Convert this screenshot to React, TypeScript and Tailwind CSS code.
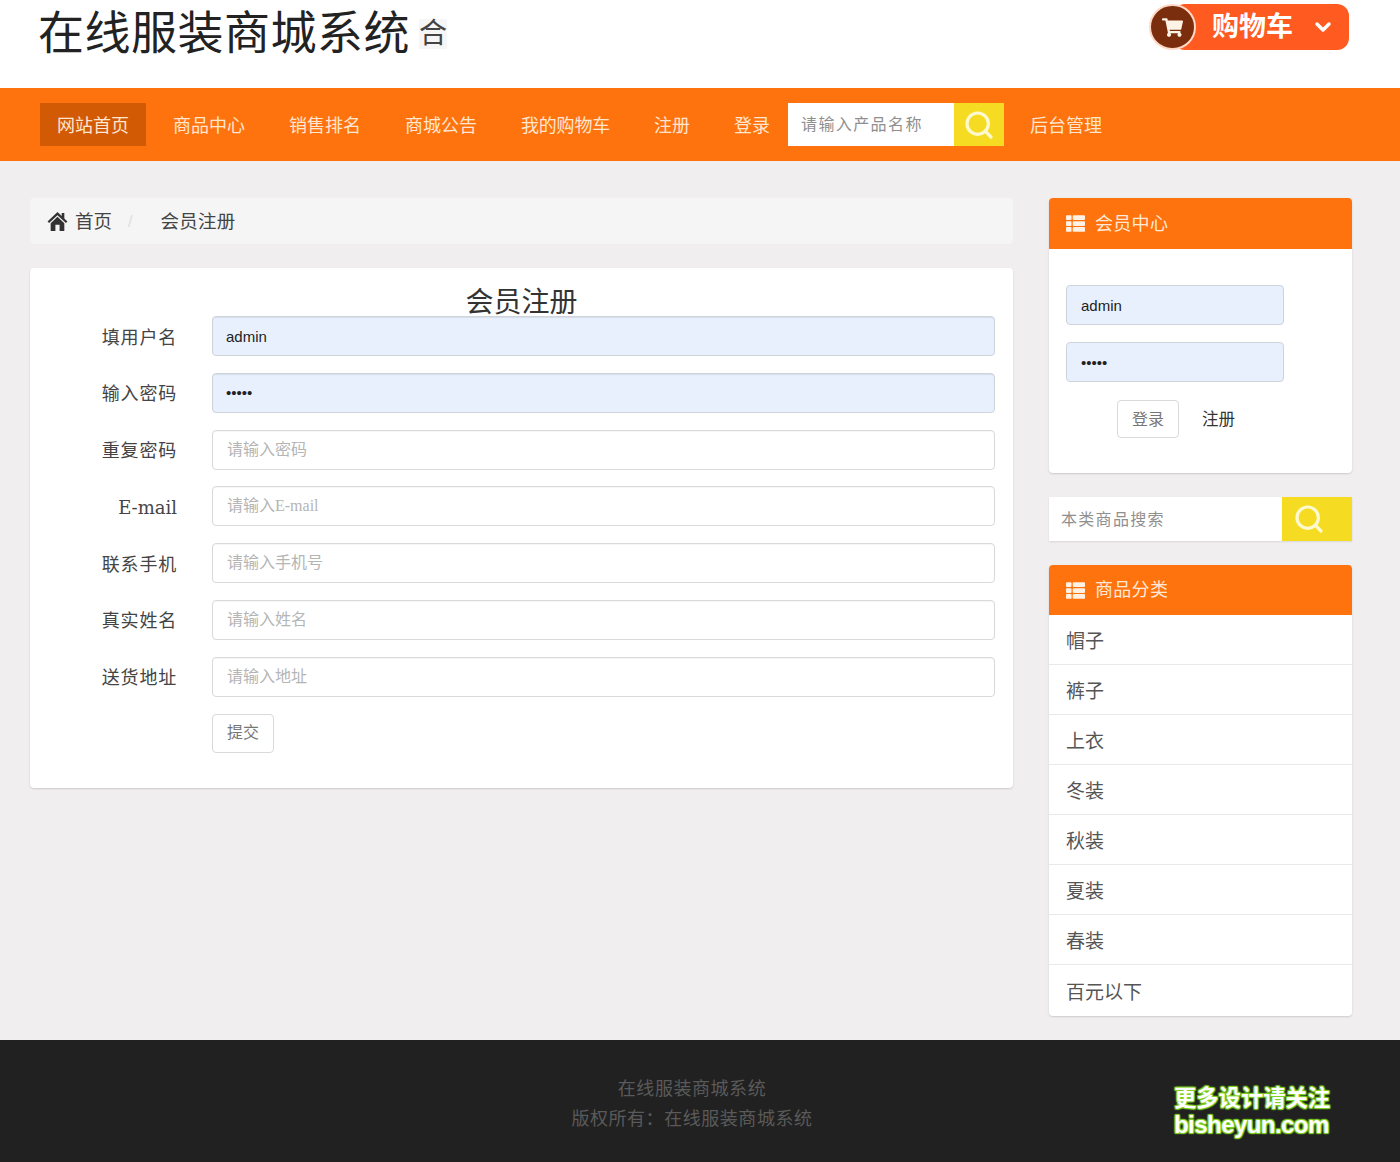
import React from "react";
import { Search, ChevronDown } from "lucide-react";
import { FaShoppingCart, FaThList } from "react-icons/fa";

const Field = ({ label, placeholder, value, type = "text" }: { label: string; placeholder?: string; value?: string; type?: string }) => (
  <div className="flex items-center h-[40px]">
    <label className={`w-[147px] pt-[2px] text-right text-[18px] text-[#444] [font-family:'DejaVu_Serif','Noto_Sans_CJK_SC',serif] ${label === "E-mail" ? "" : "tracking-[0.8px]"}`}>{label}</label>
    <input
      readOnly
      type={type}
      value={value}
      placeholder={placeholder}
      className={`ml-[35px] flex-1 h-[40px] rounded-[4px] border outline-none ${
        value
          ? "px-[13px] bg-[#e8f0fe] border-[#ced4da] text-[15px] text-[#222] shadow-[inset_0_1px_1px_rgba(0,0,0,0.08)] [font-family:'Liberation_Sans',sans-serif]"
          : "px-[14px] bg-white border-[#d9d9d9] text-[16px] placeholder:text-[#b5b5b5] shadow-[inset_0_1px_1px_rgba(0,0,0,0.04)] [font-family:'Liberation_Serif','Noto_Sans_CJK_SC',serif]"
      }`}
    />
  </div>
);

const NavLink = ({ children, className = "" }: { children: React.ReactNode; className?: string }) => (
  <a className={`block pt-[3px] text-[18px] leading-[43px] text-[#ffe6d0] whitespace-nowrap ${className}`}>{children}</a>
);

const PanelHead = ({ title, height }: { title: string; height: string }) => (
  <div className={`${height} bg-[#ff730e] rounded-t-[4px] flex items-center pl-[17px] text-[#ffe9d6]`}>
    <FaThList className="w-[19px] h-[19px] text-[#fff2e4]" />
    <span className="ml-[10px] pt-[1px] text-[18px] tracking-[0.3px]">{title}</span>
  </div>
);

const SideInput = ({ value, type = "text" }: { value: string; type?: string }) => (
  <input
    readOnly
    type={type}
    value={value}
    className="block w-[218px] h-[40px] px-[14px] rounded-[4px] border border-[#ced4da] bg-[#e8f0fe] text-[15px] text-[#222] outline-none [font-family:'Liberation_Sans',sans-serif]"
  />
);

const categories = ["帽子", "裤子", "上衣", "冬装", "秋装", "夏装", "春装", "百元以下"];

export default function App() {
  return (
    <div className="w-full min-h-[1162px] bg-[#f0eeee] text-[#333] [font-family:'Liberation_Sans','Noto_Sans_CJK_SC',sans-serif]">
      <header className="h-[88px] bg-white flex items-start justify-between pl-[38px] pr-[51px]">
        <div className="flex items-center h-[66px]">
          <span className="text-[46px] leading-[66px] text-[#222] tracking-[0.5px]">在线服装商城系统</span>
          <span className="ml-[9px] mt-[1px] text-[28px] leading-[30px] text-[#444] bg-[#f6f6f6]">合</span>
        </div>
        <div className="relative mt-[4px] w-[200px] h-[46px] ml-auto">
          <div className="absolute left-[24px] right-0 top-0 h-[46px] rounded-[12px] bg-[#ff5a1f] flex items-center pl-[39px] text-white">
            <span className="text-[27px] font-bold leading-[46px] text-white">购物车</span>
            <ChevronDown className="ml-[18px] w-[24px] h-[24px]" strokeWidth={3.5} />
          </div>
          <div className="absolute left-0 top-0 w-[47px] h-[46px] rounded-full bg-[#7a2e0e] border-2 border-[#ffd9c6] flex items-center justify-center">
            <FaShoppingCart className="w-[21px] h-[21px] text-[#fff3e6]" />
          </div>
        </div>
      </header>

      <nav className="h-[73px] bg-[#ff730e] flex items-center pl-[40px]">
        <a className="block w-[106px] h-[43px] pt-[2px] bg-[#d25a04] text-center text-[18px] leading-[43px] text-[#ffe6d0]">网站首页</a>
        <div className="ml-[27px] flex items-center gap-[44px]">
          <NavLink>商品中心</NavLink>
          <NavLink>销售排名</NavLink>
          <NavLink>商城公告</NavLink>
          <NavLink className="tracking-[-0.2px]">我的购物车</NavLink>
          <NavLink>注册</NavLink>
          <NavLink>登录</NavLink>
        </div>
        <div className="ml-[18px] flex h-[43px]">
          <input
            readOnly
            placeholder="请输入产品名称"
            className="w-[166px] h-[43px] bg-white px-[13px] text-[16px] tracking-[1.4px] outline-none placeholder:text-[#8f8f8f] [font-family:'Liberation_Serif','Noto_Sans_CJK_SC',serif]"
          />
          <button className="w-[50px] h-[43px] bg-[#f5dc22] flex items-center justify-center">
            <Search className="w-[32px] h-[32px] text-[#fff9d0]" strokeWidth={2.4} />
          </button>
        </div>
        <a className="block ml-[26px] pt-[3px] text-[18px] text-[#ffe6d0]">后台管理</a>
      </nav>

      <main className="flex gap-[36px] px-[30px] pt-[37px] pb-[24px]">
        <section className="w-[983px]">
          <div className="h-[46px] bg-[#f5f5f5] rounded-[4px] flex items-center pl-[17px] text-[18.5px] text-[#444]">
            <svg viewBox="0 0 20 20" className="w-[21px] h-[21px] text-[#333]" fill="currentColor">
              <path d="M10 1 L0.5 10 L2 11.5 L10 4 L18 11.5 L19.5 10 L16.5 7.2 V2 H14 V4.8 Z" />
              <path d="M10 5.5 L3.5 11.6 V19 H8 V13 H12 V19 H16.5 V11.6 Z" />
            </svg>
            <span className="ml-[7px] pt-[2px]">首页</span>
            <span className="ml-[16px] pt-[2px] text-[#ddd] text-[16px]">/</span>
            <span className="ml-[28px] pt-[2px] tracking-[0.3px]">会员注册</span>
          </div>
          <div className="mt-[24px] h-[520px] bg-white rounded-[4px] shadow-[0_1px_2px_rgba(0,0,0,0.15)] pr-[18px]">
            <h2 className="h-[48px] ml-[18px] text-center text-[28px] leading-[70px] text-[#333]">会员注册</h2>
            <div className="flex flex-col gap-[16.8px]">
              <Field label="填用户名" value="admin" />
              <Field label="输入密码" value="admin" type="password" />
              <Field label="重复密码" placeholder="请输入密码" />
              <Field label="E-mail" placeholder="请输入E-mail" />
              <Field label="联系手机" placeholder="请输入手机号" />
              <Field label="真实姓名" placeholder="请输入姓名" />
              <Field label="送货地址" placeholder="请输入地址" />
              <div className="pl-[182px]">
                <button className="w-[62px] h-[39px] bg-white border border-[#d9d9d9] rounded-[4px] text-[16px] text-[#777] [font-family:'Liberation_Serif','Noto_Sans_CJK_SC',serif]">提交</button>
              </div>
            </div>
          </div>
        </section>

        <aside className="w-[303px] flex flex-col gap-[24px]">
          <div className="h-[275px] bg-white rounded-[4px] shadow-[0_1px_2px_rgba(0,0,0,0.15)]">
            <PanelHead title="会员中心" height="h-[51px]" />
            <div className="pl-[17px] pt-[36px] flex flex-col gap-[17px]">
              <SideInput value="admin" />
              <SideInput value="admin" type="password" />
            </div>
            <div className="mt-[18px] pl-[68px] flex items-center">
              <button className="w-[62px] h-[38px] pt-[1px] bg-white border border-[#d9d9d9] rounded-[4px] text-[16px] text-[#777]">登录</button>
              <a className="block ml-[23px] pt-[1px] text-[16.5px] text-[#333]">注册</a>
            </div>
          </div>

          <div className="h-[44px] flex shadow-[0_1px_2px_rgba(0,0,0,0.1)]">
            <input
              readOnly
              placeholder="本类商品搜索"
              className="w-[233px] h-[44px] pt-[2px] bg-white px-[12px] text-[16px] tracking-[1.3px] outline-none placeholder:text-[#8f8f8f] [font-family:'Liberation_Serif','Noto_Sans_CJK_SC',serif]"
            />
            <button className="w-[70px] h-[44px] bg-[#f5dc22] flex items-center pl-[11px]">
              <Search className="w-[32px] h-[32px] text-[#fff9d0]" strokeWidth={2.4} />
            </button>
          </div>

          <div className="bg-white rounded-[4px] shadow-[0_1px_2px_rgba(0,0,0,0.15)]">
            <PanelHead title="商品分类" height="h-[50px]" />
            {categories.map((c, i) => (
              <div
                key={c}
                className={`pl-[17px] pt-[5px] flex items-center text-[19px] text-[#555] ${i < categories.length - 1 ? "h-[50px] border-b border-[#e9e9e9]" : "h-[51px]"}`}
              >
                {c}
              </div>
            ))}
          </div>
        </aside>
      </main>

      <footer className="relative h-[122px] bg-[#212121] pt-[34px] pr-[16px] text-center text-[18px] leading-[30px] tracking-[0.55px] text-[#5a5a5a] [font-family:'Liberation_Serif','Noto_Sans_CJK_SC',serif]">
        <p>在线服装商城系统</p>
        <p>版权所有：在线服装商城系统</p>
        <div className="absolute left-[1174px] top-[46px] w-[158px] text-left leading-[26px] font-bold tracking-normal text-white [font-family:'Liberation_Sans','Noto_Sans_CJK_SC',sans-serif] [text-shadow:0_0_2px_#7fd321,1px_1px_1px_#7fd321,-1px_-1px_1px_#7fd321,1px_-1px_1px_#7fd321,-1px_1px_1px_#7fd321]">
          <p className="whitespace-nowrap text-[22.3px]">更多设计请关注</p>
          <p className="whitespace-nowrap text-[24px] tracking-[-0.55px]">bisheyun.com</p>
        </div>
      </footer>
    </div>
  );
}
